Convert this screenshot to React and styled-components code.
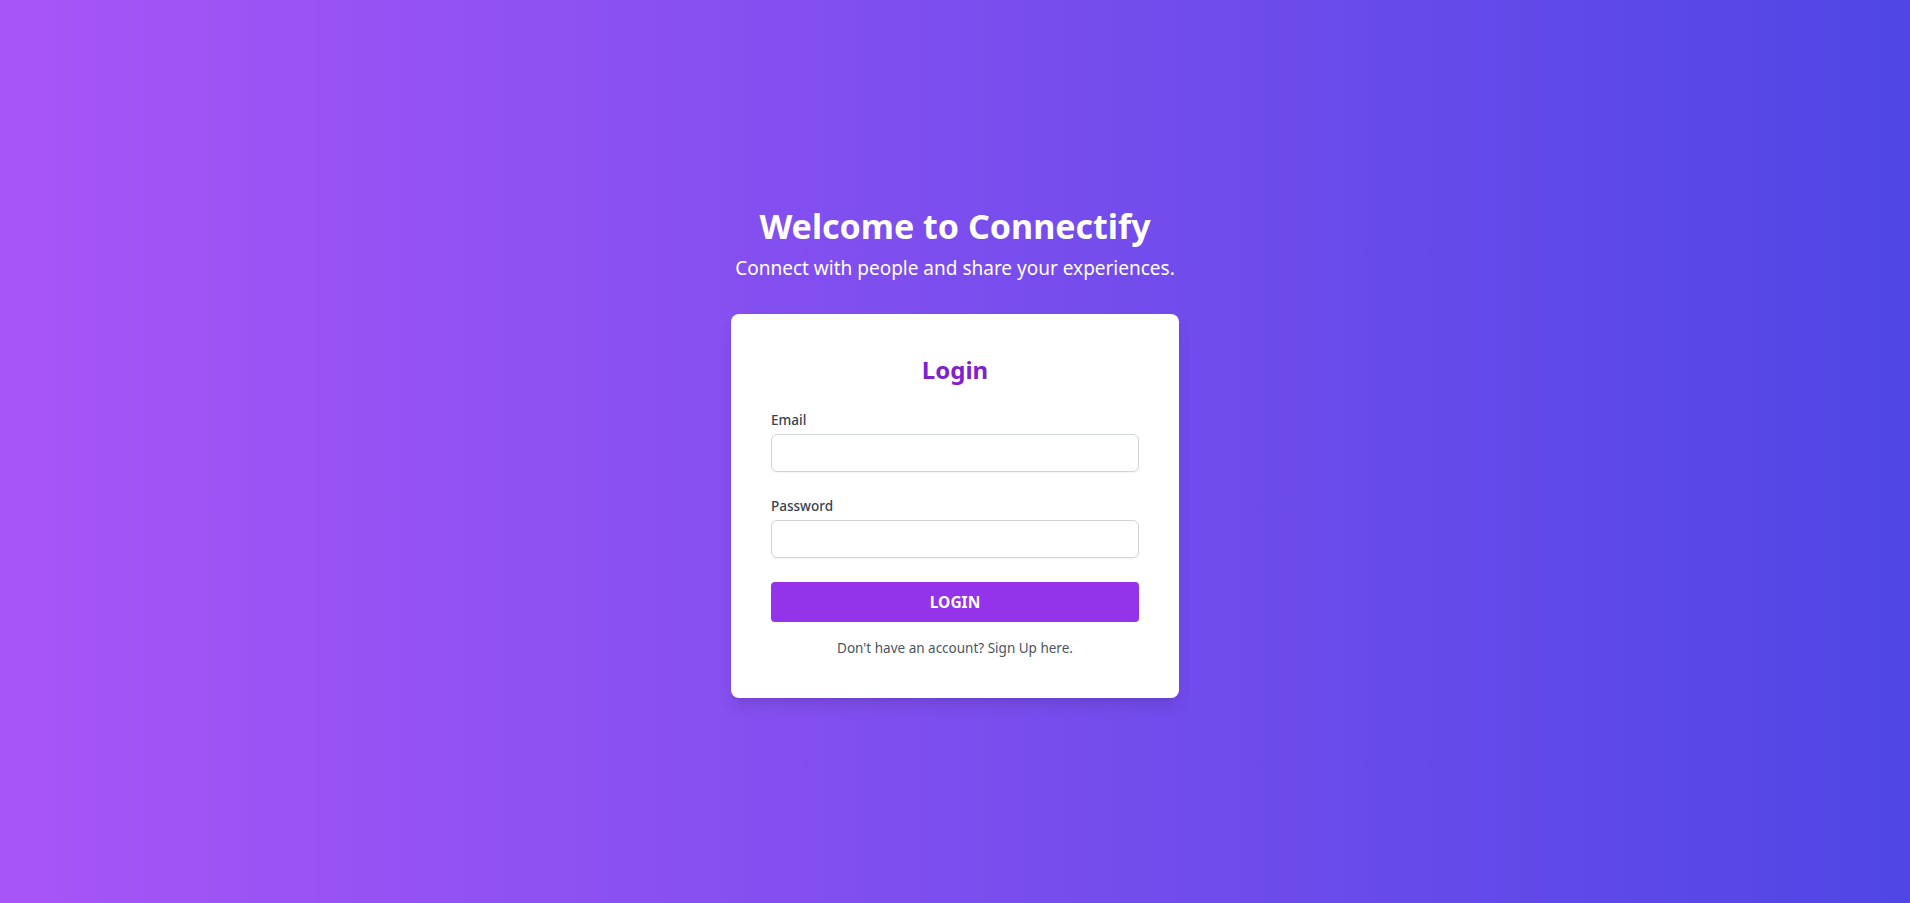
import React from "react";
import styled, { createGlobalStyle } from "styled-components";

const GlobalStyle = createGlobalStyle`
  * { box-sizing: border-box; }
  html, body { margin: 0; padding: 0; height: 100%; }
  body {
    font-family: "Noto Sans", "Liberation Sans", sans-serif;
  }
  #root { height: 100%; }
`;

const Page = styled.main`
  min-height: 100vh;
  display: flex;
  flex-direction: column;
  align-items: center;
  justify-content: center;
  background: linear-gradient(to right, #a855f7, #4f46e5);
`;

const Hero = styled.header`
  text-align: center;
  color: #fff;
  margin-bottom: 32px;
`;

const Title = styled.h1`
  margin: 0 0 8px;
  font-size: 34px;
  line-height: 40px;
  font-weight: 700;
`;

const Subtitle = styled.p`
  margin: 0;
  font-size: 19px;
  line-height: 28px;
`;

const Card = styled.section`
  width: 448px;
  background: #fff;
  border-radius: 8px;
  padding: 40px;
  box-shadow: 0 10px 15px -3px rgba(0, 0, 0, 0.1), 0 4px 6px -4px rgba(0, 0, 0, 0.1);
`;

const CardTitle = styled.h2`
  margin: 0 0 24px;
  text-align: center;
  color: #7e22ce;
  font-size: 24px;
  line-height: 32px;
  font-weight: 700;
`;

const Field = styled.div`
  margin-bottom: 24px;
`;

const Label = styled.label`
  display: block;
  margin-bottom: 4px;
  font-size: 13.5px;
  line-height: 20px;
  font-weight: 500;
  color: #374151;
`;

const Input = styled.input`
  display: block;
  width: 100%;
  height: 38px;
  padding: 8px 12px;
  border: 1px solid #d1d5db;
  border-radius: 6px;
  font: inherit;
  box-shadow: 0 1px 2px rgba(0, 0, 0, 0.05);
  outline: none;
`;

const Button = styled.button`
  display: block;
  width: 100%;
  height: 40px;
  border: none;
  border-radius: 4px;
  background: #9333ea;
  color: #fff;
  font: inherit;
  font-size: 15.5px;
  font-weight: 700;
  text-transform: uppercase;
  cursor: pointer;
`;

const Footer = styled.p`
  margin: 16px 0 0;
  text-align: center;
  font-size: 13.5px;
  line-height: 20px;
  color: #4b5563;
`;

export default function App() {
  return (
    <>
      <GlobalStyle />
      <Page>
        <Hero>
          <Title>Welcome to Connectify</Title>
          <Subtitle>Connect with people and share your experiences.</Subtitle>
        </Hero>
        <Card>
          <CardTitle>Login</CardTitle>
          <Field>
            <Label htmlFor="email">Email</Label>
            <Input id="email" type="email" />
          </Field>
          <Field>
            <Label htmlFor="password">Password</Label>
            <Input id="password" type="password" />
          </Field>
          <Button>Login</Button>
          <Footer>Don't have an account? Sign Up here.</Footer>
        </Card>
      </Page>
    </>
  );
}
